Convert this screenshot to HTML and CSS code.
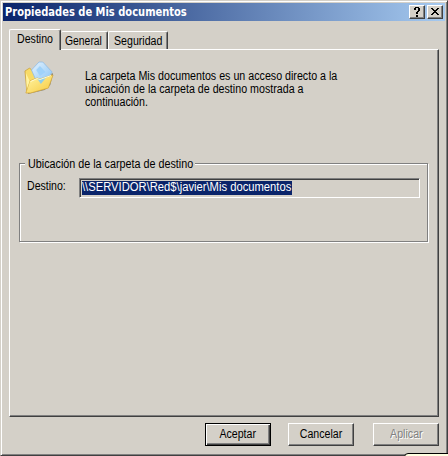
FILE: index.html
```html
<!DOCTYPE html>
<html lang="es">
<head>
<meta charset="utf-8">
<title>Propiedades de Mis documentos</title>
<link rel="stylesheet" href="styles.css">
</head>
<body>
<main class="window">
  <header class="titlebar">
    <h1 class="title">Propiedades de Mis documentos</h1>
    <div class="controls">
      <button class="control" aria-label="Ayuda">
        <svg width="12" height="10" viewBox="0 0 12 10" shape-rendering="crispEdges"><path d="M4 0h4v1H4zM3 1h2v2H3zM7 1h2v3H7zM6 4h2v1H6zM5 5h2v2H5zM5 8h2v2H5z"/></svg>
      </button>
      <button class="control" aria-label="Cerrar">
        <svg width="12" height="10" viewBox="0 0 12 10" shape-rendering="crispEdges"><path d="M2 1h2v1H2zM8 1h2v1H8zM3 2h2v1H3zM7 2h2v1H7zM4 3h4v1H4zM5 4h2v1H5zM4 5h4v1H4zM3 6h2v1H3zM7 6h2v1H7zM2 7h2v1H2zM8 7h2v1H8z"/></svg>
      </button>
    </div>
  </header>
  <nav class="tabs">
    <div class="tab tab-active"><span class="text">Destino</span></div>
    <div class="tab tab-general"><span class="text">General</span></div>
    <div class="tab tab-security"><span class="text">Seguridad</span></div>
  </nav>
  <section class="panel">
    <div class="intro">
      <svg class="folder" width="30" height="34" viewBox="0 0 32 34" preserveAspectRatio="none">
        <defs>
          <linearGradient id="front" x1="0" y1="0" x2="1" y2="1"><stop offset="0" stop-color="#fff7a8"/><stop offset="1" stop-color="#f6c83c"/></linearGradient>
          <linearGradient id="paper" x1="0" y1="0" x2="1" y2="1"><stop offset="0" stop-color="#e6f4ff"/><stop offset="1" stop-color="#86c2f4"/></linearGradient>
        </defs>
        <path d="M4 33l18-4 6-5 3-11-1-1-8 15-17 4z" fill="#66655e" opacity=".75"/>
        <path d="M1 10l5-3 3 3 18-1 2 4-4 14-17 4-5-1z" fill="#f8db66" stroke="#caa03a" stroke-width=".8"/>
        <path d="M8 9l8-8 4 0 10 10-6 9-10 2z" fill="url(#paper)" stroke="#8ebbe4" stroke-width=".8"/>
        <path d="M13 9l4-4 6 6-6 4z" fill="#9fd2fa"/>
        <path d="M2 32l4-12 8-3 3 1 14-4-5 13-19 5z" fill="url(#front)" stroke="#d8ab3e" stroke-width=".8"/>
        <path d="M14 17.500l3 .5 7-2-6 7z" fill="#8ecdea"/>
        <path d="M2 12l4 8-3 8z" fill="#fff3a0"/>
        <path d="M7 20.500l7-3 3 1 12-4" fill="none" stroke="#fffbd6" stroke-width="1"/>
      </svg>
      <p class="description"><span class="text">La carpeta Mis documentos es un acceso directo a la</span><br><span class="text">ubicación de la carpeta de destino mostrada a</span><br><span class="text">continuación.</span></p>
    </div>
    <section class="group">
      <h2 class="legend"><span class="text">Ubicación de la carpeta de destino</span></h2>
      <div class="field-row">
        <span class="field-label"><span class="text">Destino:</span></span>
        <div class="field"><div class="selection"><span class="text">\\SERVIDOR\Red$\javier\Mis documentos</span></div></div>
      </div>
    </section>
  </section>
  <footer class="actions">
    <button class="btn btn-default"><span class="text">Aceptar</span></button>
    <button class="btn"><span class="text">Cancelar</span></button>
    <button class="btn btn-disabled" disabled><span class="text">Aplicar</span></button>
  </footer>
</main>
<div class="tooltip-edge"></div>
</body>
</html>
```
FILE: styles.css
```css
* { box-sizing: border-box; }

body {
  margin: 0;
  width: 448px;
  height: 456px;
  overflow: hidden;
  position: relative;
  background: #d4d0c8;
  color: #000;
  font: 12px/13px "Liberation Sans", Arial, sans-serif;
}

/* Narrow dialog lettering */
.text {
  display: inline-block;
  transform: scaleX(.885);
  transform-origin: left;
  white-space: nowrap;
}

.window {
  width: 448px;
  height: 456px;
  display: flex;
  flex-direction: column;
  padding: 1px;
  border: 1px solid #d4d0c8;
  border-right-color: #404040;
  border-bottom-color: #404040;
  box-shadow: inset 1px 1px #fff, inset -1px -1px #808080;
}

.titlebar {
  margin: 1px 1px 0 1px;
  height: 18px;
  display: flex;
  align-items: center;
  justify-content: space-between;
  padding: 0 2px 0 2px;
  background: linear-gradient(90deg, #0a246a, #a6caf0);
  flex: none;
}

.title {
  margin: 0;
  color: #fff;
  font: bold 12px/16px "DejaVu Sans Condensed", "DejaVu Sans", sans-serif;
  white-space: nowrap;
  transform: scaleX(.92);
  transform-origin: left;
}

.controls { display: flex; gap: 2px; }

button { font: inherit; color: inherit; margin: 0; }

.control {
  width: 16px;
  height: 14px;
  padding: 0;
  display: flex;
  align-items: center;
  justify-content: center;
  background: #d4d0c8;
  border: 1px solid #fff;
  border-right-color: #404040;
  border-bottom-color: #404040;
  box-shadow: inset -1px -1px #808080;
}

.tabs {
  display: flex;
  align-items: flex-end;
  height: 28px;
  padding-left: 7px;
  flex: none;
}

.tab {
  height: 18px;
  padding: 3px 0 0 4px;
  border: 1px solid #fff;
  border-right: 1px solid #404040;
  border-bottom: 0;
  border-radius: 2px 2px 0 0;
  box-shadow: inset -1px 0 #808080;
  white-space: nowrap;
}

.tab-active {
  width: 52px;
  height: 21px;
  margin-bottom: -1px;
  padding: 3px 0 0 7px;
  background: #d4d0c8;
  position: relative;
}

.tab-general { width: 47px; border-left: 0; }
.tab-general .text { transform: scaleX(.865); }
.tab-security { width: 60px; padding-left: 5px; }

.panel {
  width: 430px;
  height: 368px;
  margin-left: 7px;
  padding: 11px 9px 0;
  border: 1px solid #fff;
  border-right-color: #404040;
  border-bottom-color: #404040;
  box-shadow: inset -1px -1px #808080;
  flex: none;
}

.intro { display: flex; height: 102px; padding-left: 5px; }
.folder { flex: none; }
.description { margin: 9px 0 0 31px; white-space: nowrap; }
.description .text { transform: scaleX(.89); }

.group {
  width: 409px;
  height: 79px;
  padding: 0 7px;
  border: 1px solid #808080;
  box-shadow: 1px 1px #fff, inset 1px 1px #fff;
}

.legend {
  width: 170px;
  height: 13px;
  margin: -6px 0 7px -2px;
  padding-left: 3px;
  background: #d4d0c8;
  font: inherit;
}

.legend .text { transform: scaleX(.897); }

.field-row { display: flex; }
.field-label { width: 52px; padding-top: 2px; }
.field-label .text { transform: scaleX(.88); }

.field {
  width: 341px;
  height: 20px;
  padding: 1px;
  border: 1px solid #808080;
  border-right-color: #fff;
  border-bottom-color: #fff;
  box-shadow: inset 1px 1px #404040;
}

.selection {
  width: 210px;
  height: 14px;
  margin: 1px 0 0 1px;
  background: #0a246a;
  color: #fff;
}

.selection .text { transform: scaleX(.935); }

.actions {
  display: flex;
  justify-content: flex-end;
  gap: 17px;
  padding: 6px 7px 0 0;
}

.btn {
  width: 66px;
  height: 23px;
  padding: 0 0 1px;
  background: #d4d0c8;
  border: 1px solid #fff;
  border-right-color: #404040;
  border-bottom-color: #404040;
  box-shadow: inset -1px -1px #808080;
}

.btn .text { transform-origin: center; }

.btn-default {
  border-color: #000;
  box-shadow: inset 1px 1px #fff, inset -1px -1px #404040, inset -2px -2px #808080;
}

.btn-disabled {
  margin-left: 2px;
  color: #808080;
  text-shadow: 1px 1px #fff;
}

.tooltip-edge {
  position: absolute;
  left: 404px;
  top: 453px;
  width: 50px;
  height: 20px;
  border: 1px solid #000;
  border-radius: 4px;
  background: #ffffe1;
}
```
